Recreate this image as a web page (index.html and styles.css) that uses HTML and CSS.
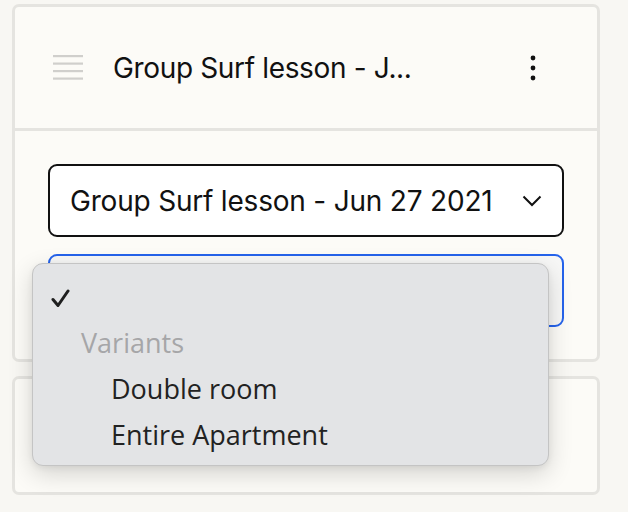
FILE: index.html
```html
<!DOCTYPE html>
<html>
<head>
<meta charset="utf-8">
<link rel="stylesheet" href="styles.css">
</head>
<body>
<div class="page">
  <section class="card card-main">
    <header class="card-head">
      <svg class="drag" width="30" height="25" viewBox="0 0 30 25"><g fill="#d0cfcc"><rect x="0" y="0" width="30" height="2.2"/><rect x="0" y="7.5" width="30" height="2.2"/><rect x="0" y="15" width="30" height="2.2"/><rect x="0" y="22.5" width="30" height="2.2"/></g></svg>
      <span class="title">Group Surf lesson - J...</span>
      <svg class="kebab" width="6" height="26" viewBox="0 0 6 26"><g fill="#111"><circle cx="3" cy="3" r="2.4"/><circle cx="3" cy="13" r="2.4"/><circle cx="3" cy="23" r="2.4"/></g></svg>
    </header>
    <div class="card-body">
      <div class="select">
        <span class="select-text">Group Surf lesson - Jun 27 2021</span>
        <svg class="chev" width="20" height="12" viewBox="0 0 20 12"><path d="M1.5 1.5 L10 10 L18.5 1.5" fill="none" stroke="#111" stroke-width="2"/></svg>
      </div>
      <div class="select select-focus"></div>
    </div>
  </section>
  <section class="card card-second"></section>
  <div class="menu">
    <div class="menu-row"><svg class="check" width="19" height="19" viewBox="0 0 19 19"><path d="M2 10.5 L7 16.5 L17 2" fill="none" stroke="#1f1f1f" stroke-width="3" stroke-linecap="round" stroke-linejoin="round"/></svg></div>
    <div class="menu-row group"><span class="label">Variants</span></div>
    <div class="menu-row item"><span class="label">Double room</span></div>
    <div class="menu-row item"><span class="label">Entire Apartment</span></div>
  </div>
</div>
</body>
</html>
```
FILE: styles.css
```css
html, body {
  margin: 0;
  padding: 0;
  background: #f8f7f3;
}
.page {
  position: relative;
  width: 628px;
  height: 512px;
  padding: 4px 28px 0 12px;
  box-sizing: border-box;
  display: flex;
  flex-direction: column;
  gap: 14px;
}
.card {
  background: #fcfbf7;
  border: 3.5px solid #e5e4e0;
  border-radius: 7px;
  box-sizing: border-box;
}
.card-main {
  height: 358px;
}
.card-second {
  height: 119px;
}
.card-head {
  height: 121px;
  border-bottom: 3.5px solid #e5e4e0;
  display: flex;
  align-items: center;
  padding: 0 0 0 38px;
  box-sizing: content-box;
}
.drag {
  flex: none;
}
.title {
  margin-left: 30px;
  font-family: "Inter", "Liberation Sans", sans-serif;
  font-size: 28px;
  color: #111;
  letter-spacing: -0.35px;
  flex: 1;
  line-height: 1;
}
.kebab {
  margin-right: 61px;
  flex: none;
}
.card-body {
  padding: 33px 33px 0 33px;
  display: flex;
  flex-direction: column;
  gap: 17px;
}
.select {
  height: 73px;
  box-sizing: border-box;
  border: 2px solid #111;
  border-radius: 9px;
  background: #fff;
  display: flex;
  align-items: center;
  padding: 0 20px;
}
.select-text {
  flex: 1;
  font-family: "Inter", "Liberation Sans", sans-serif;
  font-size: 28px;
  color: #111;
  letter-spacing: -0.2px;
  line-height: 1;
}
.select-focus {
  border-color: #2563eb;
  background: #f7f7f6;
}
.menu {
  position: absolute;
  left: 32px;
  top: 263px;
  width: 517px;
  height: 203px;
  box-sizing: border-box;
  background: #e3e4e6;
  border: 1px solid #c4c4c4;
  border-radius: 11px;
  box-shadow: 0 8px 24px rgba(0,0,0,0.16), 0 2px 6px rgba(0,0,0,0.06);
  padding: 11px 0 9px 0;
  font-family: "Open Sans", "Liberation Sans", sans-serif;
  font-size: 27px;
}
.menu-row {
  height: 46px;
  display: flex;
  align-items: center;
  color: #222;
}
.label {
  line-height: 1;
  margin-top: -4px;
}
.check {
  margin-left: 18px;
}
.group {
  padding-left: 48px;
  color: #a6a6a8;
}
.item {
  padding-left: 78px;
}
```
